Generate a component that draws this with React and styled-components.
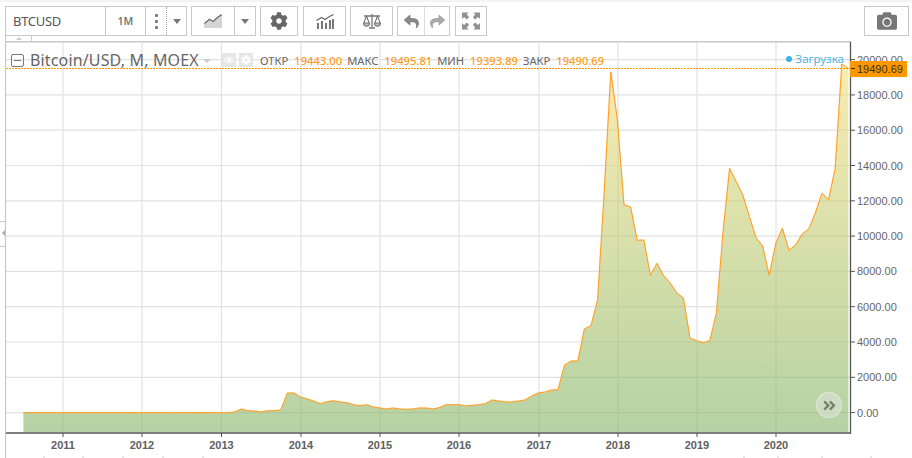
import React from 'react';
import styled, { createGlobalStyle } from 'styled-components';
import { FaCog, FaReply, FaShare, FaCamera, FaAngleDoubleRight, FaRegEye } from 'react-icons/fa';

const GlobalStyle = createGlobalStyle`
  html, body, #root {
    margin: 0;
    height: 100%;
    background: #fff;
    overflow: hidden;
  }
`;

const UI_FONT = `"Noto Sans", "Open Sans", sans-serif`;

// pixel heights of the monthly closes, first 31 months are flat
const closes = [
  ...Array(31).fill(412.7),
  412.7, 412, 409, 410.7, 411, 412, 410.7, 410.7, 410, 393, 393, 397, 399, 401, 403.7, 401.7, 400.7,
  402, 402.7, 404.7, 405.7, 404.7, 407, 408, 409, 408, 409, 409.3, 409, 408, 408, 409, 407.7, 404.7,
  404.7, 404.7, 406, 405.3, 404.7, 403.7, 400, 401, 402, 402, 401, 400, 396, 393, 392, 390, 389.7,
  365, 361, 361, 329, 325.7, 300, 192, 72, 120, 205, 207, 240.3, 240, 275.3, 263.3, 275.7, 283, 293,
  298, 338, 340.7, 342.7, 340.7, 313, 232, 168.3, 181.7, 195, 216.7, 237.7, 246, 275.3, 243.3, 228.3,
  250.3, 245, 234, 229, 212.7, 193.3, 199.7, 168.3, 64, 68.5,
];
const linePoints = closes.map((y, i) => `${(23.4 + 6.6 * i).toFixed(1)},${y}`).join(' ');
const areaPoints = `23.4,432 ${linePoints} 848.4,432`;

const years = [2011, 2012, 2013, 2014, 2015, 2016, 2017, 2018, 2019, 2020];
const yearX = [63, 142, 221.5, 301, 380, 459, 539, 618, 697, 776];
const priceLevels = [20000, 18000, 16000, 14000, 12000, 10000, 8000, 6000, 4000, 2000, 0];
const priceY = (v) => 412.6 - v * 0.01765;
const footTicks = [44, 83, 123, 163, 203, 744, 778, 822, 871];

const Page = styled.div`
  position: relative;
  width: 912px;
  height: 458px;
  overflow: hidden;
  border-top: 2px solid #f3f3f3;
  box-sizing: border-box;
  font-family: ${UI_FONT};
`;

const Toolbar = styled.div`
  display: flex;
  align-items: flex-start;
  gap: 4px;
  height: 39px;
  padding: 4px 3px 0 5px;
  box-sizing: border-box;
`;

const Group = styled.div`
  display: flex;
  height: 30px;
  border: 1px solid #c9c9c9;
  box-sizing: border-box;
  margin-left: ${(p) => p.$push || 0};
`;

const Cell = styled.div`
  display: flex;
  align-items: center;
  justify-content: ${(p) => (p.$left ? 'flex-start' : 'center')};
  width: ${(p) => p.$w}px;
  padding-left: ${(p) => (p.$left ? '7px' : 0)};
  box-sizing: border-box;
  color: ${(p) => p.$color || '#666'};
  border-left: ${(p) => (p.$divider ? `1px ${p.$divider} ${p.$dividerColor || '#c9c9c9'}` : 'none')};
`;

const Symbol = styled.span`
  font-size: 13px;
  letter-spacing: -0.3px;
  color: #555;
`;

const Period = styled.span`
  font-size: 10.5px;
  font-weight: 600;
  color: #777;
`;

const Dots = styled.div`
  display: flex;
  flex-direction: column;
  gap: 3px;
  span {
    width: 3px;
    height: 3px;
    border-radius: 1px;
    background: #777;
  }
`;

const Caret = styled.div`
  width: 0;
  height: 0;
  margin-top: 1px;
  border-left: 4.5px solid transparent;
  border-right: 4.5px solid transparent;
  border-top: 5px solid #777;
`;

const ChartPanel = styled.div`
  position: relative;
`;

const ChartSvg = styled.svg`
  display: block;
  width: 912px;
  height: 417px;
`;

const AxisText = styled.text`
  font-family: "Liberation Sans", Arial, sans-serif;
  font-size: 11px;
  fill: #666;
`;

const YearText = styled(AxisText)`
  font-weight: bold;
  fill: #606060;
`;

const PriceTagText = styled.text`
  font-family: "Liberation Sans", Arial, sans-serif;
  font-size: 11px;
  fill: #3a3000;
`;

const Legend = styled.div`
  position: absolute;
  top: 9px;
  left: 11px;
  display: flex;
  align-items: center;
  height: 20px;
  white-space: nowrap;
`;

const CollapseBox = styled.div`
  position: relative;
  width: 13px;
  height: 13px;
  margin-right: 6px;
  border: 1px solid #777;
  border-radius: 2px;
  box-sizing: border-box;
  &::after {
    content: '';
    position: absolute;
    left: 2px;
    right: 2px;
    top: 5px;
    height: 1px;
    background: #777;
  }
`;

const Title = styled.span`
  width: 169px;
  font-size: 16px;
  letter-spacing: 0.15px;
  color: #666;
`;

const TitleCaret = styled.div`
  width: 0;
  height: 0;
  margin: 1px 11px 0 4px;
  border-left: 4px solid transparent;
  border-right: 4px solid transparent;
  border-top: 4px solid #ccc;
`;

const PaleButton = styled.div`
  display: flex;
  align-items: center;
  justify-content: center;
  width: 14px;
  height: 14px;
  margin-right: 3px;
  background: #e6e6e6;
  color: #fff;
  font-size: 10px;
`;

const Label = styled.span`
  font-size: 11.2px;
  color: #666;
  margin-left: ${(p) => p.$gap || 5}px;
`;

const Value = styled.span`
  font-size: 11.2px;
  font-weight: 500;
  color: #ff9d1e;
  margin-left: 6px;
`;

const Loading = styled.div`
  position: absolute;
  top: 10px;
  right: 68px;
  display: flex;
  align-items: center;
  gap: 4px;
  font-size: 11.5px;
  color: #4fb6e3;
  &::before {
    content: '';
    width: 6px;
    height: 6px;
    border-radius: 50%;
    background: #3fb0e6;
  }
`;

const SideTab = styled.div`
  position: absolute;
  left: 0;
  top: 180px;
  width: 5px;
  height: 26px;
  border-top: 1px solid #ccc;
  border-bottom: 1px solid #ccc;
  box-sizing: border-box;
  &::after {
    content: '';
    position: absolute;
    right: 0;
    top: 8px;
    border-top: 3px solid transparent;
    border-bottom: 3px solid transparent;
    border-right: 3px solid #aaa;
  }
`;

const TopTab = styled.div`
  position: absolute;
  left: 5px;
  top: -6px;
  width: 27px;
  height: 7px;
  border-left: 1px solid #ccc;
  border-right: 1px solid #ccc;
  box-sizing: border-box;
  &::after {
    content: '';
    position: absolute;
    left: 10px;
    top: 2px;
    border-left: 3px solid transparent;
    border-right: 3px solid transparent;
    border-bottom: 3px solid #ccc;
  }
`;

const ScrollButton = styled.div`
  position: absolute;
  left: 816px;
  top: 351px;
  width: 26px;
  height: 26px;
  display: flex;
  align-items: center;
  justify-content: center;
  border-radius: 50%;
  border: 1px solid rgba(255, 255, 255, 0.35);
  box-sizing: border-box;
  background: rgba(215, 222, 205, 0.75);
  color: #6f8468;
  font-size: 15px;
`;

const LineChartIcon = () => (
  <svg width="18" height="14" viewBox="0 0 18 14">
    <path d="M0 10 L5 6 L9 8 L14 4 L18 1 V14 H0 Z" fill="#d4d4d4" />
    <path d="M0.3 9.5 L5.5 5.2 L9 7.5 L13.5 3.5 L17.7 0.6" fill="none" stroke="#666" strokeWidth="1.3" />
  </svg>
);

const IndicatorIcon = () => (
  <svg width="18" height="15" viewBox="0 0 18 15">
    <path d="M1 9h2v6H1zM5 7h2v8H5zM9 9h2v6H9zM13 6h2v9h-2zM16 5h2v10h-2z" fill="#777" />
    <path d="M0.5 6.5 L5.5 3.5 L9 5.5 L13.5 2.5 L17.5 0.5" fill="none" stroke="#666" strokeWidth="1.2" />
  </svg>
);

const ScalesIcon = () => (
  <svg width="18" height="15" viewBox="0 0 18 15" fill="none" stroke="#777" strokeWidth="1.1">
    <path d="M1 2 H17 M9 0 V13 M6 14 H12" strokeWidth="1.3" />
    <path d="M3.5 2 L0.8 9 M3.5 2 L6.2 9 M14.5 2 L11.8 9 M14.5 2 L17.2 9" />
    <path d="M0.5 9 H6.5 A3 3.2 0 0 1 0.5 9 Z M11.5 9 H17.5 A3 3.2 0 0 1 11.5 9 Z" fill="#bbb" />
  </svg>
);

const FullscreenIcon = () => (
  <svg width="18" height="18" viewBox="0 0 19 18" fill="#909090">
    <path d="M0 0 H7 L5 2 L7.5 5 L5 7.5 L2.2 4.8 L0 7 Z" />
    <path d="M19 0 H12 L14 2 L11.5 5 L14 7.5 L16.8 4.8 L19 7 Z" />
    <path d="M0 18 H7 L5 16 L7.5 13 L5 10.5 L2.2 13.2 L0 11 Z" />
    <path d="M19 18 H12 L14 16 L11.5 13 L14 10.5 L16.8 13.2 L19 11 Z" />
  </svg>
);

export default function App() {
  return (
    <>
      <GlobalStyle />
      <Page>
        <Toolbar>
          <Group>
            <Cell $w={99} $left><Symbol>BTCUSD</Symbol></Cell>
            <Cell $w={40} $divider="solid"><Period>1M</Period></Cell>
            <Cell $w={21} $divider="solid"><Dots><span /><span /><span /></Dots></Cell>
            <Cell $w={20} $divider="dotted" $dividerColor="#aaa"><Caret /></Cell>
          </Group>
          <Group>
            <Cell $w={42}><LineChartIcon /></Cell>
            <Cell $w={21} $divider="solid"><Caret /></Cell>
          </Group>
          <Group>
            <Cell $w={36}><FaCog size={18} /></Cell>
          </Group>
          <Group $push="1px">
            <Cell $w={41}><IndicatorIcon /></Cell>
          </Group>
          <Group>
            <Cell $w={41}><ScalesIcon /></Cell>
          </Group>
          <Group>
            <Cell $w={26} $color="#888"><FaReply size={15} /></Cell>
            <Cell $w={25} $divider="solid" $dividerColor="#ddd" $color="#aaa"><FaShare size={15} /></Cell>
          </Group>
          <Group $push="1px">
            <Cell $w={30}><FullscreenIcon /></Cell>
          </Group>
          <Group $push="auto">
            <Cell $w={43} $color="#777"><FaCamera size={20} /></Cell>
          </Group>
        </Toolbar>
        <ChartPanel>
          <ChartSvg viewBox="0 41 912 417">
            <defs>
              <linearGradient id="areaFill" gradientUnits="userSpaceOnUse" x1="0" y1="60" x2="0" y2="432">
                <stop offset="0" stopColor="#f6e07c" />
                <stop offset="1" stopColor="#84b467" />
              </linearGradient>
            </defs>

            {priceLevels.map((v) => (
              <line key={v} x1="6" x2="850" y1={priceY(v)} y2={priceY(v)} stroke="#e2e2e2" strokeWidth="1.2" />
            ))}
            {yearX.map((x) => (
              <line key={x} x1={x} x2={x} y1="42" y2="433" stroke="#e2e2e2" strokeWidth="1.2" />
            ))}

            <polygon points={areaPoints} fill="url(#areaFill)" fillOpacity="0.6" />
            <polyline points={linePoints} fill="none" stroke="#fbc77f" strokeOpacity="0.3" strokeWidth="1.8" strokeLinejoin="round" />
            <polyline points={linePoints} fill="none" stroke="#ff9d1e" strokeWidth="1" strokeLinejoin="round" />

            <line x1="5.5" x2="851" y1="41.8" y2="41.8" stroke="#c8c8c8" strokeWidth="1.4" />
            <line x1="5.5" x2="5.5" y1="41" y2="458" stroke="#c8c8c8" strokeWidth="1.2" />
            <line x1="6" x2="851" y1="433" y2="433" stroke="#555" strokeWidth="1.3" />
            <line x1="850.5" x2="850.5" y1="42" y2="433.6" stroke="#555" strokeWidth="1.3" />

            <line x1="6" x2="850" y1="68.5" y2="68.5" stroke="#ff9800" strokeWidth="1" strokeDasharray="2 1" />

            {priceLevels.map((v) => (
              <g key={v}>
                <line x1="851" x2="855" y1={priceY(v)} y2={priceY(v)} stroke="#555" />
                <AxisText x="857" y={priceY(v) + 4}>{v.toFixed(2)}</AxisText>
              </g>
            ))}
            {years.map((year, i) => (
              <g key={year}>
                <line x1={yearX[i]} x2={yearX[i]} y1="433" y2="437" stroke="#555" />
                <YearText x={yearX[i]} y="449" textAnchor="middle">{year}</YearText>
              </g>
            ))}
            {footTicks.map((x) => (
              <line key={x} x1={x} x2={x} y1="456" y2="458" stroke="#ccc" />
            ))}

            <rect x="850" y="61" width="57" height="16" fill="#ff9800" />
            <line x1="851" x2="855" y1="68.5" y2="68.5" stroke="#3a3000" />
            <PriceTagText x="857" y="73">19490.69</PriceTagText>
          </ChartSvg>

          <TopTab />
          <SideTab />

          <Legend>
            <CollapseBox />
            <Title>Bitcoin/USD, M, MOEX</Title>
            <TitleCaret />
            <PaleButton><FaRegEye /></PaleButton>
            <PaleButton><FaCog /></PaleButton>
            <Label $gap={4}>ОТКР</Label>
            <Value>19443.00</Value>
            <Label>МАКС</Label>
            <Value>19495.81</Value>
            <Label>МИН</Label>
            <Value>19393.89</Value>
            <Label>ЗАКР</Label>
            <Value>19490.69</Value>
          </Legend>
          <Loading>Загрузка</Loading>

          <ScrollButton><FaAngleDoubleRight /></ScrollButton>
        </ChartPanel>
      </Page>
    </>
  );
}
